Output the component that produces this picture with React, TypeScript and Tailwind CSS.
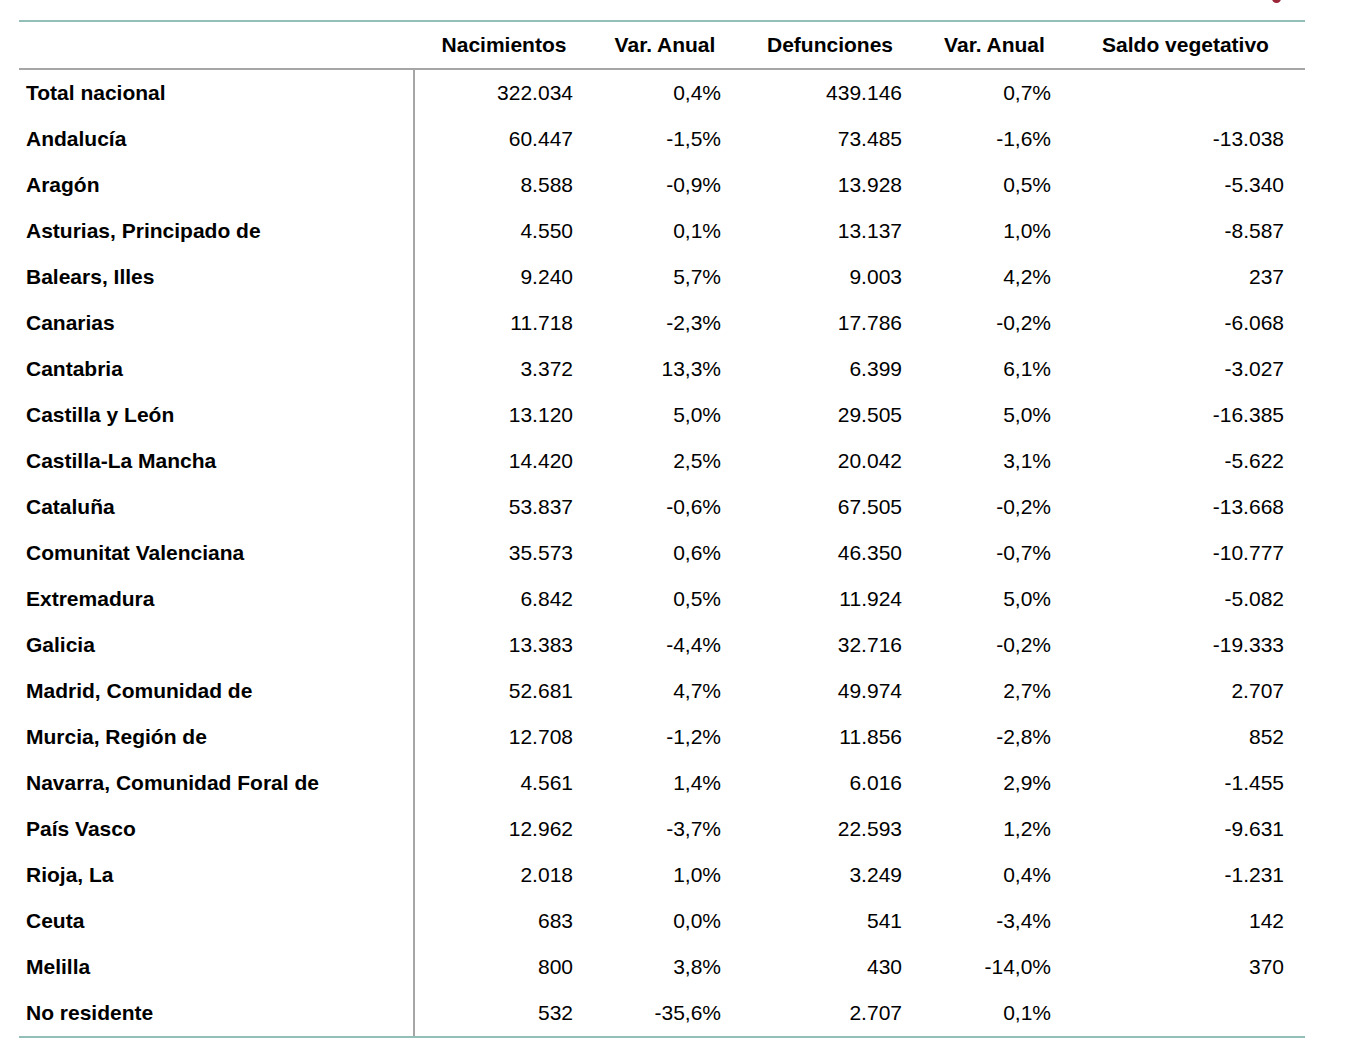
import React from "react";

const rows: [string, string, string, string, string, string][] = [
  ["Total nacional", "322.034", "0,4%", "439.146", "0,7%", ""],
  ["Andalucía", "60.447", "-1,5%", "73.485", "-1,6%", "-13.038"],
  ["Aragón", "8.588", "-0,9%", "13.928", "0,5%", "-5.340"],
  ["Asturias, Principado de", "4.550", "0,1%", "13.137", "1,0%", "-8.587"],
  ["Balears, Illes", "9.240", "5,7%", "9.003", "4,2%", "237"],
  ["Canarias", "11.718", "-2,3%", "17.786", "-0,2%", "-6.068"],
  ["Cantabria", "3.372", "13,3%", "6.399", "6,1%", "-3.027"],
  ["Castilla y León", "13.120", "5,0%", "29.505", "5,0%", "-16.385"],
  ["Castilla-La Mancha", "14.420", "2,5%", "20.042", "3,1%", "-5.622"],
  ["Cataluña", "53.837", "-0,6%", "67.505", "-0,2%", "-13.668"],
  ["Comunitat Valenciana", "35.573", "0,6%", "46.350", "-0,7%", "-10.777"],
  ["Extremadura", "6.842", "0,5%", "11.924", "5,0%", "-5.082"],
  ["Galicia", "13.383", "-4,4%", "32.716", "-0,2%", "-19.333"],
  ["Madrid, Comunidad de", "52.681", "4,7%", "49.974", "2,7%", "2.707"],
  ["Murcia, Región de", "12.708", "-1,2%", "11.856", "-2,8%", "852"],
  ["Navarra, Comunidad Foral de", "4.561", "1,4%", "6.016", "2,9%", "-1.455"],
  ["País Vasco", "12.962", "-3,7%", "22.593", "1,2%", "-9.631"],
  ["Rioja, La", "2.018", "1,0%", "3.249", "0,4%", "-1.231"],
  ["Ceuta", "683", "0,0%", "541", "-3,4%", "142"],
  ["Melilla", "800", "3,8%", "430", "-14,0%", "370"],
  ["No residente", "532", "-35,6%", "2.707", "0,1%", ""],
];

const grid = "grid grid-cols-[396px_178px_144px_186px_143px_239px]";

export default function App() {
  return (
    <div
      className="relative w-[1350px] h-[1056px] bg-white text-black text-[21px]"
      style={{ fontFamily: '"Liberation Sans", Arial, sans-serif' }}
    >
      <div className="absolute left-[1272px] top-[-6px] w-[9px] h-[9px] rounded-full bg-[#9b2638]" />
      <div className="pt-[20px] pl-[19px]">
        <div className="w-[1286px] border-t-2 border-b-2 border-t-[#93bfbb] border-b-[#93bfbb]">
          <div className={`${grid} h-[48px] border-b-2 border-[#a6a6a6] font-bold`}>
            <div />
            <div className="flex items-center justify-center">Nacimientos</div>
            <div className="flex items-center justify-center">Var. Anual</div>
            <div className="flex items-center justify-center">Defunciones</div>
            <div className="flex items-center justify-center">Var. Anual</div>
            <div className="flex items-center justify-center">Saldo vegetativo</div>
          </div>
          {rows.map((r) => (
            <div key={r[0]} className={`${grid} h-[46px]`}>
              <div className="flex items-center pl-[7px] font-bold border-r-2 border-[#a6a6a6]">{r[0]}</div>
              <div className="flex items-center justify-end pr-[20px]">{r[1]}</div>
              <div className="flex items-center justify-end pr-[16px]">{r[2]}</div>
              <div className="flex items-center justify-end pr-[21px]">{r[3]}</div>
              <div className="flex items-center justify-end pr-[15px]">{r[4]}</div>
              <div className="flex items-center justify-end pr-[21px]">{r[5]}</div>
            </div>
          ))}
        </div>
      </div>
    </div>
  );
}
